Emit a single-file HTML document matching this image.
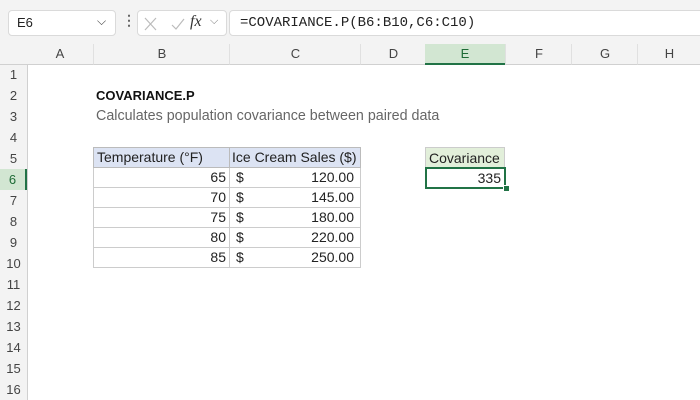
<html><head><style>
html,body{margin:0;width:700px;height:400px;overflow:hidden;background:#fff;font-family:"Liberation Sans",sans-serif;position:relative}
.a{position:absolute}
.top{left:0;top:0;width:700px;height:44px;background:#f3f3f3}
.box{background:#fff;border:1px solid #dadada;border-radius:4px}
.ch{top:44px;height:20px;background:#f3f3f3;border-bottom:1px solid #d0d0d0;font-size:13px;color:#444;text-align:center;line-height:20px}
.rh{left:0;width:27px;background:#f3f3f3;font-size:13px;color:#444;text-align:center;border-right:1px solid #d0d0d0}
.c{font-size:14px;color:#222;height:21px;line-height:21px;box-sizing:border-box}
table td{white-space:nowrap;overflow:hidden;line-height:19px}
</style></head><body>
<div class="a top"></div>
<div class="a box" style="left:8px;top:10px;width:106px;height:24px"><span class="a" style="left:8px;top:4px;font-size:13px;color:#222">E6</span><span class="a" style="left:88px;top:3px;font-size:12px;color:#444">⌵</span></div>
<div class="a" style="left:122px;top:12px;font-size:14px;color:#666;font-weight:bold">⋮</div>
<div class="a box" style="left:137px;top:10px;width:88px;height:24px">
<svg class="a" style="left:6px;top:6px" width="60" height="14"><path d="M1 1L12 13M12 1L1 13" stroke="#bbb" stroke-width="1.2"/><path d="M28 8L32 12L40 2" stroke="#bbb" stroke-width="1.2" fill="none"/></svg>
<span class="a" style="left:52px;top:2px;font-family:'Liberation Serif',serif;font-style:italic;font-size:16px;color:#333">fx</span><span class="a" style="left:72px;top:4px;font-size:11px;color:#777">⌵</span></div>
<div class="a box" style="left:229px;top:10px;width:480px;height:24px"><span class="a" style="left:10px;top:4px;font-family:'Liberation Mono',monospace;font-size:14px;color:#222">=COVARIANCE.P(B6:B10,C6:C10)</span></div>
<div class="a" style="left:0;top:44px;width:27px;height:20px;background:#f3f3f3;border-bottom:1px solid #d0d0d0;border-right:1px solid #d0d0d0"></div>
<div class="a ch" style="left:27px;width:66px">A</div>
<div class="a ch" style="left:93px;width:136px;border-left:1px solid #e0e0e0">B</div>
<div class="a ch" style="left:229px;width:131px;border-left:1px solid #e0e0e0">C</div>
<div class="a ch" style="left:360px;width:65px;border-left:1px solid #e0e0e0">D</div>
<div class="a ch" style="left:425px;width:80px;background:#d2e6d2;color:#1e6b36;border-bottom:2px solid #217346;height:19px">E</div>
<div class="a ch" style="left:505px;width:66px;border-left:1px solid #e0e0e0">F</div>
<div class="a ch" style="left:571px;width:66px;border-left:1px solid #e0e0e0">G</div>
<div class="a ch" style="left:637px;width:63px;border-left:1px solid #e0e0e0">H</div>
<div class="a rh" style="top:65px;height:335px"></div>
<div class="a" style="left:0;top:64px;width:27px;font-size:13px;color:#444;text-align:center;line-height:21px">1<br>2<br>3<br>4<br>5<br><span style="display:block;background:#d2e6d2;color:#1e6b36;border-right:2px solid #217346">6</span>7<br>8<br>9<br>10<br>11<br>12<br>13<br>14<br>15<br>16</div>
<div class="a" style="left:96px;top:85px;font-size:13px;font-weight:bold;color:#111;line-height:21px">COVARIANCE.P</div>
<div class="a" style="left:96px;top:106px;font-size:14.3px;color:#666;line-height:21px">Calculates population covariance between paired data</div>
<table class="a" style="left:93px;top:147px;border-collapse:collapse;font-size:14px;color:#222;table-layout:fixed;width:267px">
<colgroup><col style="width:136px"><col style="width:131px"></colgroup>
<tr style="background:#dce3f3"><td style="height:20px;border:1px solid #bbb;padding:0 3px">Temperature (°F)</td><td style="border:1px solid #bbb;padding:0 2px">Ice Cream Sales ($)</td></tr>
<tr><td style="height:20px;border:1px solid #ccc;text-align:right;padding:0 3px">65</td><td style="border:1px solid #ccc;padding:0 6px">$<span style="float:right">120.00</span></td></tr>
<tr><td style="height:20px;border:1px solid #ccc;text-align:right;padding:0 3px">70</td><td style="border:1px solid #ccc;padding:0 6px">$<span style="float:right">145.00</span></td></tr>
<tr><td style="height:20px;border:1px solid #ccc;text-align:right;padding:0 3px">75</td><td style="border:1px solid #ccc;padding:0 6px">$<span style="float:right">180.00</span></td></tr>
<tr><td style="height:20px;border:1px solid #ccc;text-align:right;padding:0 3px">80</td><td style="border:1px solid #ccc;padding:0 6px">$<span style="float:right">220.00</span></td></tr>
<tr><td style="height:20px;border:1px solid #ccc;text-align:right;padding:0 3px">85</td><td style="border:1px solid #ccc;padding:0 6px">$<span style="float:right">250.00</span></td></tr>
</table>
<div class="a c" style="left:425px;top:147px;width:80px;background:#e2efda;border:1px solid #ccc;padding-left:3px">Covariance</div>
<div class="a c" style="left:425px;top:167px;width:81px;height:22px;border:2px solid #217346;text-align:right;padding-right:3px;line-height:18px">335</div>
<div class="a" style="left:503px;top:185px;width:5px;height:5px;background:#217346;border:1px solid #fff"></div>
</body></html>
